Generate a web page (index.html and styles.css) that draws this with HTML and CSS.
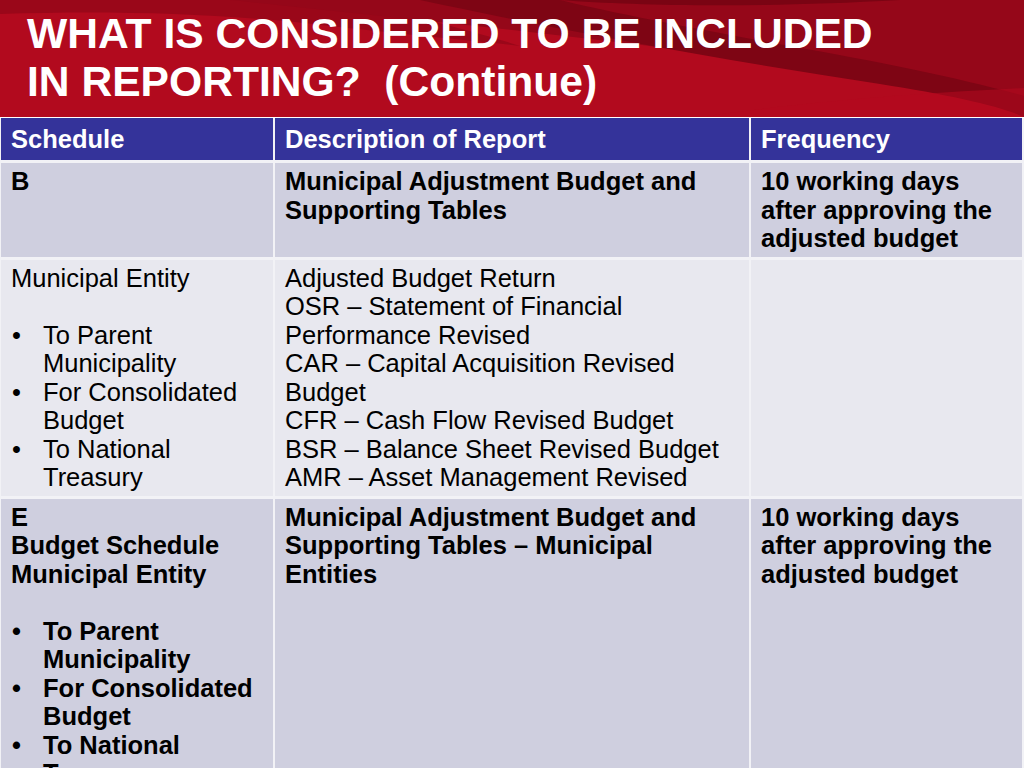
FILE: index.html
```html
<!DOCTYPE html>
<html lang="en">
<head>
<meta charset="utf-8">
<title>What is considered to be included in reporting? (Continue)</title>
<link rel="stylesheet" href="styles.css">
</head>
<body>
<header class="banner">
  <svg class="banner-bg" viewBox="0 0 1024 117" preserveAspectRatio="none" aria-hidden="true">
    <rect width="1024" height="117" fill="#b20a1e"/>
    <path d="M0 0 L0 14 C120 10 230 14 330 26 C420 36 470 40 520 46 C470 30 400 12 330 0 Z" fill="#9a0719"/>
    <path d="M230 0 C420 20 620 40 800 66 C900 80 980 96 1024 106 L1024 0 Z" fill="#950719"/>
    <path d="M420 0 C560 30 720 60 880 84 C950 95 1000 106 1024 117 L1024 96 C960 78 880 62 790 46 C680 26 600 10 560 0 Z" fill="#7e0514"/>
    <path d="M560 0 C640 6 760 8 900 0 Z" fill="#7a0413"/>
    <path d="M700 117 C820 100 940 92 1024 88 L1024 117 Z" fill="#b40a1f" opacity="0.55"/>
  </svg>
  <h1 class="title">WHAT IS CONSIDERED TO BE INCLUDED<br>IN REPORTING?&nbsp; (Continue)</h1>
</header>

<main class="table">
  <div class="cell head">Schedule</div>
  <div class="cell head">Description of Report</div>
  <div class="cell head">Frequency</div>

  <div class="cell dark bold">B</div>
  <div class="cell dark bold">Municipal Adjustment Budget and Supporting Tables</div>
  <div class="cell dark bold">10 working days after approving the adjusted budget</div>

  <div class="cell light">
    <p class="lead">Municipal Entity</p>
    <ul class="bullets">
      <li>To Parent Municipality</li>
      <li>For Consolidated Budget</li>
      <li>To National Treasury</li>
    </ul>
  </div>
  <div class="cell light">
    <p>Adjusted Budget Return</p>
    <p>OSR – Statement of Financial Performance Revised</p>
    <p>CAR – Capital Acquisition Revised Budget</p>
    <p>CFR – Cash Flow Revised Budget</p>
    <p>BSR – Balance Sheet Revised Budget</p>
    <p>AMR – Asset Management Revised</p>
  </div>
  <div class="cell light"></div>

  <div class="cell dark bold">
    <p>E</p>
    <p>Budget Schedule</p>
    <p class="lead">Municipal Entity</p>
    <ul class="bullets">
      <li>To Parent Municipality</li>
      <li>For Consolidated Budget</li>
      <li>To National Treasury</li>
    </ul>
  </div>
  <div class="cell dark bold">Municipal Adjustment Budget and Supporting Tables – Municipal Entities</div>
  <div class="cell dark bold">10 working days after approving the adjusted budget</div>
</main>
</body>
</html>
```

FILE: styles.css
```css
* {
  box-sizing: border-box;
}

html, body {
  margin: 0;
  padding: 0;
}

body {
  width: 1024px;
  height: 768px;
  overflow: hidden;
  background: #ffffff;
  font-family: "Liberation Sans", Arial, sans-serif;
  color: #000000;
}

.banner {
  position: relative;
  height: 117px;
  padding: 9px 0 0 27px;
  overflow: hidden;
}

.banner-bg {
  position: absolute;
  left: 0;
  top: 0;
  width: 100%;
  height: 100%;
  display: block;
}

.title {
  position: relative;
  margin: 0;
  font-size: 42.6px;
  line-height: 48px;
  font-weight: bold;
  color: #ffffff;
}

.table {
  margin-top: 1px;
  display: grid;
  grid-template-columns: 272px 474px 271px;
  column-gap: 2px;
  row-gap: 3px;
  padding: 0 2px 0 1px;
  background: #f2f2f6;
  font-size: 25.5px;
  line-height: 28.5px;
}

.cell {
  padding: 4px 9px 4px 10px;
}

.cell p {
  margin: 0;
}

.head {
  height: 42px;
  display: flex;
  align-items: center;
  background: #34339a;
  color: #ffffff;
  font-weight: bold;
  padding-top: 0;
  padding-bottom: 0;
}

.dark {
  background: #cfcfdf;
}

.light {
  background: #e8e8ef;
}

.bold {
  font-weight: bold;
}

.lead {
  margin-bottom: 28.5px !important;
}

.bullets {
  list-style: none;
  margin: 0;
  padding: 0;
}

.bullets li {
  display: grid;
  grid-template-columns: 32px 1fr;
}

.bullets li::before {
  content: "•";
  padding-left: 1px;
}
```
